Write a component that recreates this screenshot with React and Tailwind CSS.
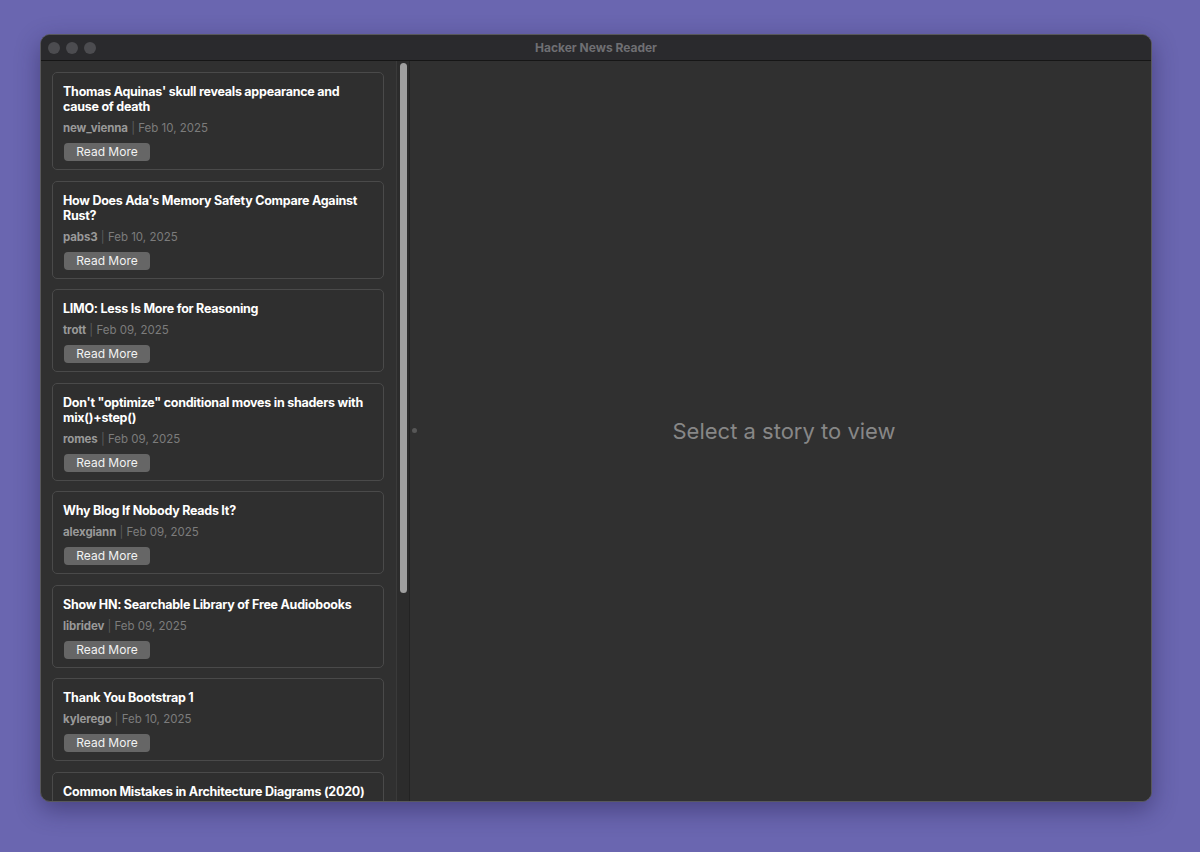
const stories = [
  { title: "Thomas Aquinas' skull reveals appearance and cause of death", by: "new_vienna", date: "Feb 10, 2025" },
  { title: "How Does Ada's Memory Safety Compare Against Rust?", by: "pabs3", date: "Feb 10, 2025" },
  { title: "LIMO: Less Is More for Reasoning", by: "trott", date: "Feb 09, 2025" },
  { title: 'Don\'t "optimize" conditional moves in shaders with mix()+step()', by: "romes", date: "Feb 09, 2025" },
  { title: "Why Blog If Nobody Reads It?", by: "alexgiann", date: "Feb 09, 2025" },
  { title: "Show HN: Searchable Library of Free Audiobooks", by: "libridev", date: "Feb 09, 2025" },
  { title: "Thank You Bootstrap 1", by: "kylerego", date: "Feb 10, 2025" },
  { title: "Common Mistakes in Architecture Diagrams (2020)", by: "swyx", date: "Feb 09, 2025" },
];

function StoryCard({ story }) {
  return (
    <div className="shrink-0 rounded-[5px] border border-[#4a4a4a] bg-[#2f2f2f] pt-[11px] pr-[10px] pb-[8px] pl-[10px]">
      <h3 className="text-[12.5px] font-bold leading-[15px] tracking-[-0.02em] text-white">{story.title}</h3>
      <div className="mt-[6px] text-[11.5px] leading-[16px] text-[#7c7c7c]">
        <span className="font-bold tracking-[-0.01em] text-[#999999]">{story.by}</span>
        <span className="text-[#5c5c5c]"> | </span>
        {story.date}
      </div>
      <button className="ml-px mt-[7px] flex h-[18px] w-[86px] items-center justify-center rounded-[4px] bg-[#666666] text-[12px] leading-none text-[#f2f2f2]">
        Read More
      </button>
    </div>
  );
}

export default function App() {
  return (
    <div className="h-[852px] w-[1200px] bg-[#6a66b0] pl-[40px] pt-[34px]" style={{ fontFamily: "Inter, 'Noto Sans', sans-serif" }}>
      <div className="flex h-[768px] w-[1112px] flex-col overflow-hidden rounded-[10px] border border-[#58585c] bg-[#303030] shadow-[0_8px_24px_rgba(30,25,70,0.45)]">
        {/* title bar */}
        <div className="relative flex h-[26px] shrink-0 items-center border-b border-[#161616] bg-[#2a2a2d]">
          <div className="flex gap-[6px] pl-[7px]">
            <span className="h-[12px] w-[12px] rounded-full bg-[#4c4c50]" />
            <span className="h-[12px] w-[12px] rounded-full bg-[#4c4c50]" />
            <span className="h-[12px] w-[12px] rounded-full bg-[#4c4c50]" />
          </div>
          <div className="absolute inset-0 flex items-center justify-center text-[12px] font-bold text-[#6f6f73]">
            Hacker News Reader
          </div>
        </div>

        <div className="flex min-h-0 flex-1">
          {/* story list */}
          <div className="flex w-[355px] shrink-0 flex-col gap-[10.5px] overflow-hidden pl-[11px] pr-[12px] pt-[11px]">
            {stories.map((s) => (
              <StoryCard key={s.title} story={s} />
            ))}
          </div>

          {/* scrollbar */}
          <div className="relative w-[13px] shrink-0 border-l border-[#3a3a3a] bg-[#2c2c2c]">
            <div className="absolute left-[3px] top-[2px] h-[530px] w-[7px] rounded-full bg-[#a0a0a0]" />
          </div>

          {/* detail pane */}
          <div className="relative flex flex-1 items-center justify-center border-l border-[#232323] bg-[#303030] pl-[7px]">
            <span className="absolute left-[2px] top-[367px] h-[5px] w-[5px] rounded-full bg-[#575757]" />
            <p className="text-[22px] text-[#878787]">Select a story to view</p>
          </div>
        </div>
      </div>
    </div>
  );
}
